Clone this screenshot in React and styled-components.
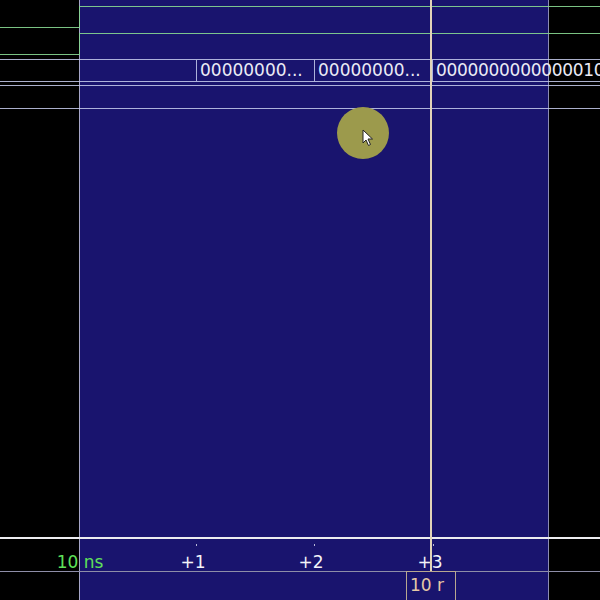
import styled, { createGlobalStyle } from "styled-components";

const Global = createGlobalStyle`
  html, body {
    margin: 0;
    padding: 0;
    background: #000;
  }
`;

const Viewer = styled.div`
  position: relative;
  width: 600px;
  height: 600px;
  background: #000;
  overflow: hidden;
  display: flex;
  flex-direction: column;
  font-family: "DejaVu Sans", Verdana, sans-serif;
`;

// marker region spans the waves and the ruler
const Marked = styled.div`
  position: absolute;
  top: 0;
  bottom: 0;
  left: 79px;
  width: 470px;
  box-sizing: border-box;
  background: #19146e;
  border-left: 1px solid #a6a6c8;
  border-right: 1px solid #8c8cb4;
`;

const Waves = styled.div`
  position: relative;
  height: 537px;
  flex: none;
  display: flex;
  flex-direction: column;
  padding-top: 6px;
  box-sizing: border-box;
  z-index: 1;
`;

const Row = styled.div`
  display: flex;
  height: ${(p) => p.$h}px;
  margin-top: ${(p) => p.$mt || 0}px;
  flex: none;
`;

const Level = styled.div`
  box-sizing: border-box;
  width: ${(p) => (p.$w ? `${p.$w}px` : "auto")};
  flex: ${(p) => (p.$w ? "none" : "1")};
  border-color: rgba(135, 215, 145, 0.9);
  border-style: solid;
  border-width: 0;
  ${(p) => (p.$hi ? "border-top-width: 1px;" : "border-bottom-width: 1px;")}
  ${(p) => p.$edge && "border-left-width: 1px;"}
`;

const BusSeg = styled.div`
  box-sizing: border-box;
  width: ${(p) => (p.$w ? `${p.$w}px` : "auto")};
  flex: ${(p) => (p.$w ? "none" : "1")};
  min-width: 0;
  border-top: 1px solid rgba(200, 206, 238, 0.85);
  border-bottom: 1px solid rgba(200, 206, 238, 0.85);
  border-left: ${(p) => (p.$edge ? "1px solid rgba(200, 206, 238, 0.85)" : "none")};
  padding-left: 3px;
  font-size: 17px;
  line-height: 21px;
  letter-spacing: ${(p) => (p.$tight ? "-0.3px" : "0")};
  color: #ebebf5;
  white-space: nowrap;
  overflow: hidden;
`;

const Ruler = styled.div`
  position: relative;
  flex: 1;
  border-top: 2px solid #ececf0;
  z-index: 1;
`;

const Tick = styled.span`
  position: absolute;
  top: 13px;
  left: ${(p) => p.$x}px;
  transform: translateX(-50%);
  font-size: 17px;
  line-height: 20px;
  color: ${(p) => (p.$base ? "#5fe05a" : "#f4f4f8")};
  white-space: nowrap;
`;

const TickMark = styled.i`
  position: absolute;
  top: 5px;
  left: ${(p) => p.$x}px;
  width: 1px;
  height: 2px;
  background: #b8b8d8;
`;

const Baseline = styled.div`
  position: absolute;
  left: 0;
  right: 0;
  top: 32px;
  height: 1px;
  background: #8e8ea8;
`;

const CursorTime = styled.div`
  position: absolute;
  top: 32px;
  left: 406px;
  width: 50px;
  height: 40px;
  box-sizing: border-box;
  border: 1px solid #b8a890;
  padding: 3px 0 0 3px;
  font-size: 17px;
  line-height: 20px;
  color: #e6c8a6;
  white-space: nowrap;
  overflow: hidden;
`;

const CursorLine = styled.div`
  position: absolute;
  top: 0;
  left: 430px;
  width: 2px;
  height: 571px;
  background: #e2d4b8;
  z-index: 2;
`;

const Pointer = styled.div`
  position: absolute;
  left: 337px;
  top: 107px;
  width: 52px;
  height: 52px;
  border-radius: 50%;
  background: #9c9a4c;
  z-index: 3;
`;

const Arrow = styled.svg`
  position: absolute;
  left: 25px;
  top: 22px;
`;

const ticks = [
  { x: 193, label: "+1" },
  { x: 311, label: "+2" },
  { x: 430, label: "+3" },
];

const busValues = [
  { w: 196 },
  { w: 118, v: "00000000..." },
  { w: 118, v: "00000000..." },
  { v: "000000000000001000", tight: true },
];

export default function App() {
  return (
    <>
      <Global />
      <Viewer>
        <Marked />
        <Waves>
          <Row $h={22}>
            <Level $w={79} />
            <Level $hi $edge />
          </Row>
          <Row $h={22} $mt={5}>
            <Level $w={79} />
            <Level $hi $edge />
          </Row>
          <Row $h={23} $mt={4}>
            {busValues.map((b, i) => (
              <BusSeg key={i} $w={b.w} $edge={i > 0} $tight={b.tight}>
                {b.v}
              </BusSeg>
            ))}
          </Row>
          <Row $h={24} $mt={3}>
            <BusSeg />
          </Row>
          <Pointer>
            <Arrow width="12" height="18" viewBox="0 0 12 18">
              <path
                d="M1 1V14L4 11L6.5 16.5L8.5 15.5L6 10H10.5Z"
                fill="#fff"
                stroke="#222"
                strokeWidth="1"
              />
            </Arrow>
          </Pointer>
        </Waves>
        <Ruler>
          {ticks.map((t) => (
            <TickMark key={t.x} $x={t.x + 3} />
          ))}
          <Tick $x={80} $base>
            10 ns
          </Tick>
          {ticks.map((t) => (
            <Tick key={t.label} $x={t.x}>
              {t.label}
            </Tick>
          ))}
          <Baseline />
          <CursorTime>10 r</CursorTime>
        </Ruler>
        <CursorLine />
      </Viewer>
    </>
  );
}
